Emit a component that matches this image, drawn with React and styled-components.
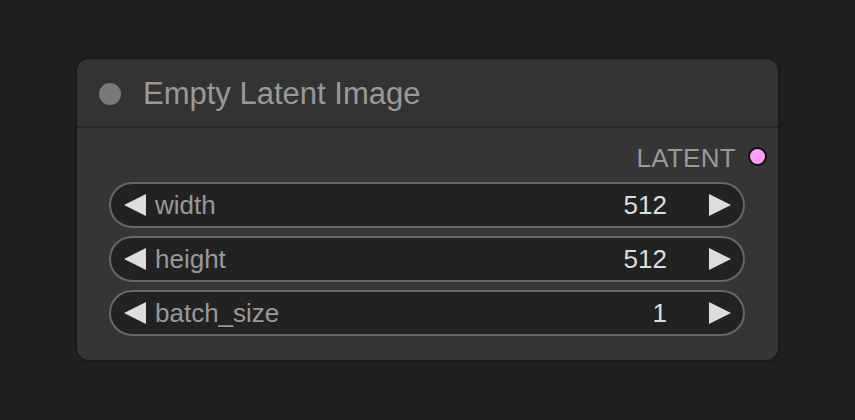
import React from "react";
import styled, { createGlobalStyle } from "styled-components";

const Global = createGlobalStyle`
  html, body { margin: 0; padding: 0; background: #202020; }
  body { width: 855px; height: 420px; overflow: hidden; font-family: "Liberation Sans", Arial, sans-serif; }
`;

const Page = styled.div`
  width: 855px;
  height: 420px;
  padding: 59px 0 0 77px;
  box-sizing: border-box;
`;

const Node = styled.div`
  width: 701px;
  height: 301px;
  background: #353535;
  border-radius: 12px;
  box-shadow: 0 0 3px 1px rgba(0, 0, 0, 0.35);
  overflow: hidden;
  display: flex;
  flex-direction: column;
`;

const TitleBar = styled.div`
  height: 69px;
  background: #333333;
  border-bottom: 2px solid #262626;
  display: flex;
  align-items: center;
  padding-left: 22px;
  gap: 22px;
  box-sizing: border-box;
`;

const Dot = styled.div`
  width: 22px;
  height: 22px;
  border-radius: 50%;
  background: #7a7a7a;
  margin-top: 2px;
`;

const Title = styled.div`
  color: #999999;
  font-size: 31px;
  line-height: 1;
  margin-top: 2px;
`;

const Body = styled.div`
  display: flex;
  flex-direction: column;
  padding: 0 33px 0 32px;
`;

const OutputRow = styled.div`
  height: 54px;
  box-sizing: border-box;
  padding-top: 5px;
  display: flex;
  align-items: center;
  justify-content: flex-end;
  gap: 12px;
  margin-right: -22px;
`;

const OutLabel = styled.span`
  color: #999999;
  font-size: 26px;
  line-height: 1;
  letter-spacing: 0.3px;
`;

const Socket = styled.div`
  width: 15px;
  height: 15px;
  border-radius: 50%;
  background: #ff9cf9;
  border: 2px solid #111;
  margin-top: -2px;
`;

const Widgets = styled.div`
  display: flex;
  flex-direction: column;
  gap: 8px;
`;

const Widget = styled.div`
  height: 46px;
  box-sizing: border-box;
  border: 2px solid #666666;
  border-radius: 23px;
  background: #222222;
  display: flex;
  align-items: center;
  padding: 0 12px 0 13px;
`;

const Arrow = styled.span`
  width: 0;
  height: 0;
  border-top: 11px solid transparent;
  border-bottom: 11px solid transparent;
  ${(p) => (p.$dir === "left" ? "border-right: 22px solid #dddddd;" : "border-left: 22px solid #dddddd;")}
`;

const Label = styled.span`
  color: #999999;
  font-size: 26px;
  margin-left: 9px;
  flex: 1;
`;

const Value = styled.span`
  color: #dddddd;
  font-size: 26px;
  margin-right: 42px;
`;

const widgets = [
  { label: "width", value: "512" },
  { label: "height", value: "512" },
  { label: "batch_size", value: "1" },
];

export default function App() {
  return (
    <>
      <Global />
      <Page>
        <Node>
          <TitleBar>
            <Dot />
            <Title>Empty Latent Image</Title>
          </TitleBar>
          <Body>
            <OutputRow>
              <OutLabel>LATENT</OutLabel>
              <Socket />
            </OutputRow>
            <Widgets>
              {widgets.map((w) => (
                <Widget key={w.label}>
                  <Arrow $dir="left" />
                  <Label>{w.label}</Label>
                  <Value>{w.value}</Value>
                  <Arrow $dir="right" />
                </Widget>
              ))}
            </Widgets>
          </Body>
        </Node>
      </Page>
    </>
  );
}
